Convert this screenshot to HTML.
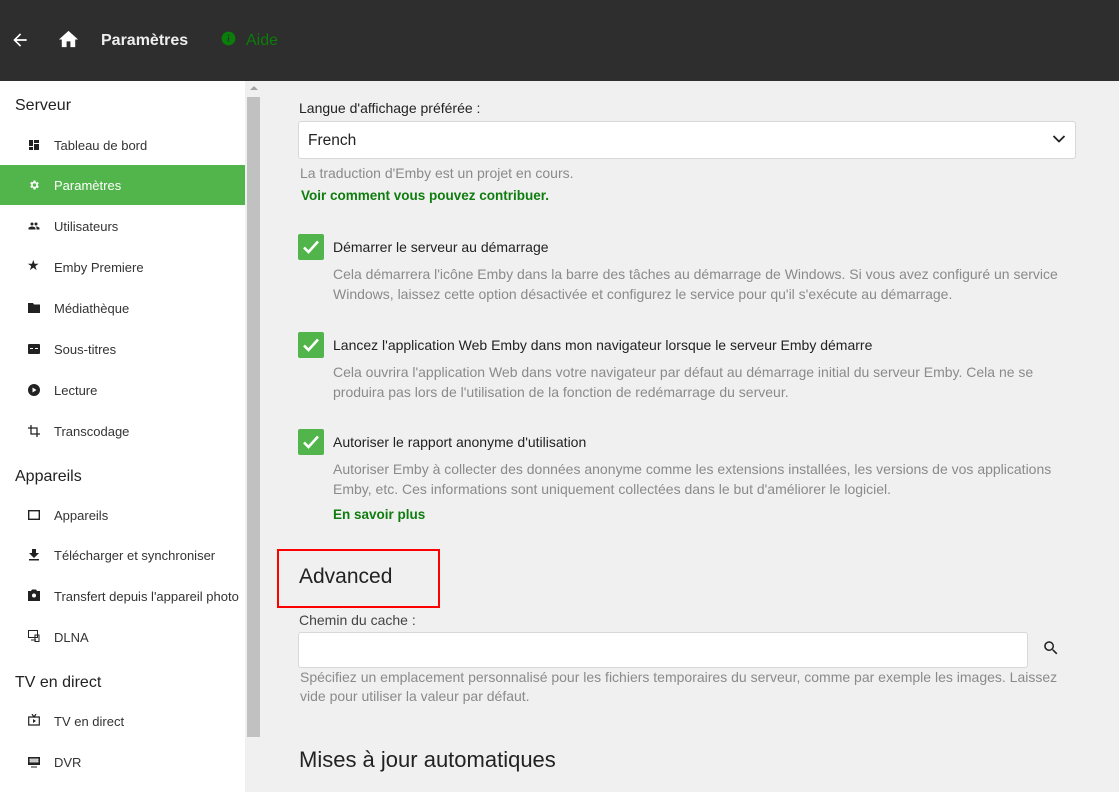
<!DOCTYPE html>
<html><head><meta charset="utf-8"><style>
*{margin:0;padding:0;box-sizing:border-box}
body{width:1119px;height:792px;overflow:hidden;background:#f0f0f0;font-family:"Liberation Sans",sans-serif;position:relative;color:#222}
.hdr{position:absolute;left:0;top:0;width:1119px;height:81px;background:#2e2e2e}
.a{position:absolute;white-space:nowrap}
.side{position:absolute;left:0;top:81px;width:245px;height:711px;background:#fff}
.sh{position:absolute;left:15px;font-size:16px;color:#222}
.it{position:absolute;left:54px;font-size:13px;color:#333}
.ic{position:absolute;left:28px;width:12px;height:12px}
.act{position:absolute;left:0;top:165px;width:245px;height:40px;background:#52b54b}
.lab{font-size:14px;color:#222}
.desc{font-size:14px;color:#8a8a8a;line-height:20px}
.lnk{font-size:13.5px;color:#0e7d0e;font-weight:bold}
.cb{position:absolute;left:298px;width:26px;height:26px;background:#52b54b;border-radius:2px}
.inp{position:absolute;background:#fff;border:1px solid #d8d8d8;border-radius:3px}
h2{font-weight:normal;font-size:21px;color:#222}
</style></head><body>
<div class="hdr"></div>
<svg class="a" style="left:10px;top:30px" width="20" height="20" viewBox="0 0 24 24"><path d="M20 11H7.8l5.6-5.6L12 4l-8 8 8 8 1.4-1.4L7.8 13H20z" fill="#fff"/></svg>
<svg class="a" style="left:57px;top:28px" width="23" height="23" viewBox="0 0 24 24"><path d="M10 20v-6h4v6h5v-8h3L12 3 2 12h3v8z" fill="#fff"/></svg>
<div class="a" style="left:101px;top:32px;font-size:16px;font-weight:bold;color:#eee">Paramètres</div>
<svg class="a" style="left:221px;top:31px" width="15" height="15" viewBox="0 0 24 24"><circle cx="12" cy="12" r="11" fill="#0a7d0a"/><path d="M11 10h2v7h-2zM11 6h2v2h-2z" fill="#2e2e2e"/></svg>
<div class="a" style="left:246px;top:32px;font-size:16px;color:#0a7d0a">Aide</div>

<div class="side"></div>
<div class="act"></div>
<div class="sh a" style="top:97px">Serveur</div>
<svg class="ic" style="top:139px" viewBox="0 0 12 12"><path d="M1 1h4v6H1zM6 1h5v3H6zM6 5h5v6H6zM1 8h4v3H1z" fill="#222"/></svg>
<div class="it a" style="top:138px">Tableau de bord</div>
<svg class="ic" style="top:179px" viewBox="0 0 24 24"><path d="M19.4 13a7.5 7.5 0 000-2l2.1-1.6-2-3.5-2.5 1a7 7 0 00-1.7-1L15 3h-4l-.4 2.7a7 7 0 00-1.7 1l-2.5-1-2 3.5L6.6 11a7.5 7.5 0 000 2l-2.1 1.6 2 3.5 2.5-1a7 7 0 001.7 1L11 21h4l.4-2.7a7 7 0 001.7-1l2.5 1 2-3.5zM13 15.5a3.5 3.5 0 110-7 3.5 3.5 0 010 7z" fill="#fff"/></svg>
<div class="it a" style="top:178px;color:#fff">Paramètres</div>
<svg class="ic" style="top:220px" viewBox="0 0 24 24"><path d="M16 11a3 3 0 100-6 3 3 0 000 6zm-8 0a3 3 0 100-6 3 3 0 000 6zm0 2c-2.3 0-7 1.2-7 3.5V19h14v-2.5C15 14.2 10.3 13 8 13zm8 0c-.3 0-.6 0-1 .1 1.2.8 2 1.9 2 3.4V19h6v-2.5c0-2.3-4.7-3.5-7-3.5z" fill="#222"/></svg>
<div class="it a" style="top:219px">Utilisateurs</div>
<div class="a" style="left:27px;top:257px;font-size:14px;color:#222">★</div>
<div class="it a" style="top:260px">Emby Premiere</div>
<svg class="ic" style="top:302px" viewBox="0 0 12 12"><path d="M0 1h5l1 1.5h6V11H0z" fill="#222"/></svg>
<div class="it a" style="top:301px">Médiathèque</div>
<svg class="ic" style="top:343px" viewBox="0 0 12 12"><rect x="0" y="1" width="12" height="10" rx="1" fill="#222"/><path d="M2 5h3v1H2zM7 5h3v1H7z" fill="#fff"/></svg>
<div class="it a" style="top:342px">Sous-titres</div>
<svg class="ic" style="top:384px" viewBox="0 0 12 12"><circle cx="6" cy="6" r="6" fill="#222"/><path d="M4.5 3.5v5l4-2.5z" fill="#fff"/></svg>
<div class="it a" style="top:383px">Lecture</div>
<svg class="ic" style="top:425px" viewBox="0 0 12 12"><path d="M3 0v9h9M0 3h9v9" fill="none" stroke="#222" stroke-width="1.3"/></svg>
<div class="it a" style="top:424px">Transcodage</div>
<div class="sh a" style="top:468px">Appareils</div>
<svg class="ic" style="top:509px" viewBox="0 0 12 12"><rect x="0.7" y="1.7" width="10.6" height="8.6" fill="none" stroke="#222" stroke-width="1.4"/></svg>
<div class="it a" style="top:508px">Appareils</div>
<svg class="ic" style="top:549px" viewBox="0 0 12 12"><path d="M4 0h4v4h3L6 9 1 4h3zM1 10h10v1.5H1z" fill="#222"/></svg>
<div class="it a" style="top:548px">Télécharger et synchroniser</div>
<svg class="ic" style="top:589px" viewBox="0 0 12 12"><path d="M0 2h3l1-1.5h4L9 2h3v10H0z" fill="#222"/><circle cx="6" cy="6.5" r="2" fill="#fff"/></svg>
<div class="it a" style="top:589px">Transfert depuis l'appareil photo</div>
<svg class="ic" style="top:630px" viewBox="0 0 12 12"><path d="M.5.5h9v7h-9zM3 10h5M7 5h4v6.5H7z" fill="none" stroke="#222"/></svg>
<div class="it a" style="top:630px">DLNA</div>
<div class="sh a" style="top:674px">TV en direct</div>
<svg class="ic" style="top:714px" viewBox="0 0 12 12"><path d="M.7 3h10.6v8H.7zM4 0l2 3 2-3" fill="none" stroke="#222" stroke-width="1.2"/><path d="M5 5v4l3-2z" fill="#222"/></svg>
<div class="it a" style="top:714px">TV en direct</div>
<svg class="ic" style="top:756px" viewBox="0 0 12 12"><rect y="1" width="12" height="8" fill="#222"/><path d="M2 3h8v1H2zM2 5h8v1H2z" stroke="#fff" stroke-width=".8" fill="none"/><path d="M3 11h6" stroke="#222"/></svg>
<div class="it a" style="top:755px">DVR</div>

<div class="a" style="left:247px;top:84px;width:13px;height:708px;background:#f0f0f0"></div>
<div class="a" style="left:250px;top:86px;width:0;height:0;border-left:4px solid transparent;border-right:4px solid transparent;border-bottom:4px solid #a3a3a3"></div>
<div class="a" style="left:247px;top:97px;width:13px;height:640px;background:#c1c1c1"></div>

<div class="a lab" style="left:299px;top:100px">Langue d'affichage préférée :</div>
<div class="inp" style="left:298px;top:121px;width:778px;height:38px"></div>
<div class="a" style="left:308px;top:132px;font-size:15.5px;color:#222">French</div>
<svg class="a" style="left:1052px;top:134px" width="14" height="10" viewBox="0 0 14 10"><path d="M1.5 2l5.5 5.5L12.5 2" fill="none" stroke="#222" stroke-width="1.8"/></svg>
<div class="a desc" style="left:300px;top:163px">La traduction d'Emby est un projet en cours.</div>
<div class="a lnk" style="left:301px;top:188px">Voir comment vous pouvez contribuer.</div>

<div class="cb" style="top:234px"></div>
<svg class="a" style="left:302px;top:238px" width="18" height="18" viewBox="0 0 18 18"><path d="M2 9.5l4.5 4.5L16 3.5" fill="none" stroke="#fff" stroke-width="2.6"/></svg>
<div class="a lab" style="left:333px;top:239px">Démarrer le serveur au démarrage</div>
<div class="a desc" style="left:333px;top:264px">Cela démarrera l'icône Emby dans la barre des tâches au démarrage de Windows. Si vous avez configuré un service<br>Windows, laissez cette option désactivée et configurez le service pour qu'il s'exécute au démarrage.</div>

<div class="cb" style="top:332px"></div>
<svg class="a" style="left:302px;top:336px" width="18" height="18" viewBox="0 0 18 18"><path d="M2 9.5l4.5 4.5L16 3.5" fill="none" stroke="#fff" stroke-width="2.6"/></svg>
<div class="a lab" style="left:333px;top:337px">Lancez l'application Web Emby dans mon navigateur lorsque le serveur Emby démarre</div>
<div class="a desc" style="left:333px;top:362px">Cela ouvrira l'application Web dans votre navigateur par défaut au démarrage initial du serveur Emby. Cela ne se<br>produira pas lors de l'utilisation de la fonction de redémarrage du serveur.</div>

<div class="cb" style="top:429px"></div>
<svg class="a" style="left:302px;top:433px" width="18" height="18" viewBox="0 0 18 18"><path d="M2 9.5l4.5 4.5L16 3.5" fill="none" stroke="#fff" stroke-width="2.6"/></svg>
<div class="a lab" style="left:333px;top:434px">Autoriser le rapport anonyme d'utilisation</div>
<div class="a desc" style="left:333px;top:459px">Autoriser Emby à collecter des données anonyme comme les extensions installées, les versions de vos applications<br>Emby, etc. Ces informations sont uniquement collectées dans le but d'améliorer le logiciel.</div>
<div class="a lnk" style="left:333px;top:507px">En savoir plus</div>

<div class="a" style="left:277px;top:549px;width:163px;height:59px;border:2px solid #f00"></div>
<h2 class="a" style="left:299px;top:565px;font-weight:500">Advanced</h2>
<div class="a lab" style="left:299px;top:612px;color:#444">Chemin du cache :</div>
<div class="inp" style="left:298px;top:632px;width:730px;height:36px"></div>
<svg class="a" style="left:1042px;top:639px" width="18" height="18" viewBox="0 0 24 24"><path d="M15.5 14h-.8l-.3-.3A6.5 6.5 0 109.5 16a6.5 6.5 0 004.2-1.6l.3.3v.8l5 5 1.5-1.5zm-6 0a4.5 4.5 0 110-9 4.5 4.5 0 010 9z" fill="#222"/></svg>
<div class="a desc" style="left:300px;top:668px;line-height:19px">Spécifiez un emplacement personnalisé pour les fichiers temporaires du serveur, comme par exemple les images. Laissez<br>vide pour utiliser la valeur par défaut.</div>
<h2 class="a" style="left:299px;top:747px;font-size:22px">Mises à jour automatiques</h2>
</body></html>
